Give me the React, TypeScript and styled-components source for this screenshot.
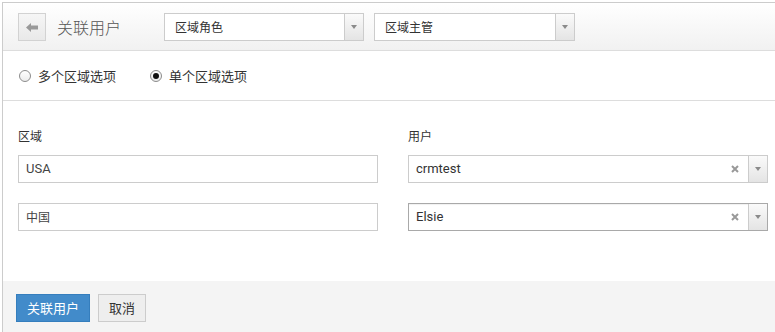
import React, { FC } from "react";
import styled, { createGlobalStyle } from "styled-components";

const GlobalStyle = createGlobalStyle`
  body {
    margin: 0;
    background: #fff;
    font-family: Roboto, "Noto Sans CJK SC", sans-serif;
    overflow: hidden;
  }
`;

const Panel = styled.div`
  margin: 2px 0 0 2px;
  border-left: 1px solid #ccc;
  border-top: 1px solid #ccc;
  width: 773px;
  height: 329px;
  display: flex;
  flex-direction: column;
`;

const Header = styled.div`
  height: 48px;
  flex-shrink: 0;
  box-sizing: border-box;
  padding: 10px 15px 0;
  display: flex;
  align-items: flex-start;
  background: linear-gradient(to bottom, #ffffff, #f1f1f1);
  border-bottom: 1px solid #ddd;
`;

const BackButton = styled.div`
  width: 28px;
  height: 28px;
  box-sizing: border-box;
  border: 1px solid #d2d2d2;
  background: linear-gradient(to bottom, #f6f6f6, #e9e9e9);
  display: flex;
  align-items: center;
  justify-content: center;
`;

const Title = styled.div`
  font-family: "Noto Sans CJK SC", sans-serif;
  font-size: 16px;
  font-weight: 300;
  color: #555;
  line-height: 28px;
  margin-left: 11px;
  width: 107px;
`;

const Select = styled.div<{ $width: number; $focused?: boolean }>`
  width: ${(p) => p.$width}px;
  height: 28px;
  box-sizing: border-box;
  border: 1px solid ${(p) => (p.$focused ? "#a9a9a9" : "#ccc")};
  box-shadow: ${(p) => (p.$focused ? "inset 0 1px 1px rgba(0,0,0,0.06)" : "none")};
  background: #fff;
  display: flex;
  align-items: stretch;
  margin-right: 10px;
`;

const SelectText = styled.div<{ $latin?: boolean }>`
  flex: 1;
  padding-left: ${(p) => (p.$latin ? 7 : 10)}px;
  font-family: ${(p) =>
    p.$latin ? `Roboto, sans-serif` : `"Noto Sans CJK SC", sans-serif`};
  font-size: ${(p) => (p.$latin ? 13 : 12)}px;
  color: #333;
  line-height: 26px;
`;

const ClearIcon = styled.div`
  width: 18px;
  display: flex;
  align-items: center;
  justify-content: center;
  margin-right: 4px;
`;

const Caret = styled.div<{ $w: number }>`
  width: ${(p) => p.$w}px;
  border-left: 1px solid #ccc;
  background: linear-gradient(to bottom, #fafafa, #e4e4e4);
  display: flex;
  align-items: center;
  justify-content: center;
  &::after {
    content: "";
    border-left: 3px solid transparent;
    border-right: 3px solid transparent;
    border-top: 4px solid #8a8a8a;
  }
`;

const RadioRow = styled.div`
  height: 50px;
  flex-shrink: 0;
  box-sizing: border-box;
  border-bottom: 1px solid #ddd;
  padding-left: 16px;
  display: flex;
  align-items: center;
  gap: 34px;
`;

const RadioOption = styled.label`
  display: flex;
  align-items: center;
  gap: 7px;
  font-family: "Noto Sans CJK SC", sans-serif;
  font-size: 13px;
  color: #333;
`;

const RadioCircle = styled.span<{ $checked?: boolean }>`
  width: 12px;
  height: 12px;
  box-sizing: border-box;
  border-radius: 50%;
  border: 1px solid #8c8c8c;
  background: linear-gradient(to bottom, #fff, #ececec);
  display: flex;
  align-items: center;
  justify-content: center;
  &::after {
    content: "";
    width: 6px;
    height: 6px;
    border-radius: 50%;
    background: ${(p) => (p.$checked ? "#111" : "transparent")};
  }
`;

const Form = styled.div`
  flex: 1;
  padding: 26px 0 0 15px;
  display: grid;
  grid-template-columns: 360px 360px;
  column-gap: 30px;
  align-content: start;
`;

const Column = styled.div`
  display: flex;
  flex-direction: column;
  gap: 20px;
`;

const Label = styled.div`
  font-family: "Noto Sans CJK SC", sans-serif;
  font-size: 12px;
  color: #333;
  line-height: 18px;
  margin-bottom: -10px;
`;

const Input = styled.div<{ $latin?: boolean }>`
  height: 28px;
  box-sizing: border-box;
  border: 1px solid #ccc;
  padding-left: 7px;
  font-family: ${(p) =>
    p.$latin ? `Roboto, sans-serif` : `"Noto Sans CJK SC", sans-serif`};
  font-size: ${(p) => (p.$latin ? 13 : 12)}px;
  color: #444;
  line-height: 26px;
`;

const Footer = styled.div`
  height: 51px;
  flex-shrink: 0;
  box-sizing: border-box;
  background: #f4f4f4;
  padding: 13px 0 0 13px;
  display: flex;
  align-items: flex-start;
  gap: 8px;
`;

const Button = styled.div<{ $primary?: boolean }>`
  height: 28px;
  box-sizing: border-box;
  padding: 0 ${(p) => (p.$primary ? 10 : 10)}px;
  border: 1px solid ${(p) => (p.$primary ? "#357ebd" : "#ccc")};
  background: ${(p) => (p.$primary ? "#428bca" : "#eee")};
  color: ${(p) => (p.$primary ? "#fff" : "#333")};
  font-family: "Noto Sans CJK SC", sans-serif;
  font-size: 13px;
  line-height: 26px;
`;

const BackArrow: FC = () => (
  <svg width="12" height="9" viewBox="0 0 12 9">
    <path d="M0 4.5 L5 0 L5 2.5 L12 2.5 L12 6.5 L5 6.5 L5 9 Z" fill="#999" />
  </svg>
);

const Cross: FC = () => (
  <svg width="8" height="8" viewBox="0 0 8 8">
    <path d="M1 1 L7 7 M7 1 L1 7" stroke="#999" strokeWidth="2" />
  </svg>
);

const App: FC = () => {
  return (
    <>
      <GlobalStyle />
      <Panel>
        <Header>
          <BackButton>
            <BackArrow />
          </BackButton>
          <Title>关联用户</Title>
          <Select $width={200}>
            <SelectText>区域角色</SelectText>
            <Caret $w={18} />
          </Select>
          <Select $width={201}>
            <SelectText>区域主管</SelectText>
            <Caret $w={18} />
          </Select>
        </Header>
        <RadioRow>
          <RadioOption>
            <RadioCircle />
            多个区域选项
          </RadioOption>
          <RadioOption>
            <RadioCircle $checked />
            单个区域选项
          </RadioOption>
        </RadioRow>
        <Form>
          <Column>
            <Label>区域</Label>
            <Input $latin>USA</Input>
            <Input>中国</Input>
          </Column>
          <Column>
            <Label>用户</Label>
            <Select $width={360}>
              <SelectText $latin>crmtest</SelectText>
              <ClearIcon>
                <Cross />
              </ClearIcon>
              <Caret $w={18} />
            </Select>
            <Select $width={360} $focused>
              <SelectText $latin>Elsie</SelectText>
              <ClearIcon>
                <Cross />
              </ClearIcon>
              <Caret $w={18} />
            </Select>
          </Column>
        </Form>
        <Footer>
          <Button $primary>关联用户</Button>
          <Button>取消</Button>
        </Footer>
      </Panel>
    </>
  );
};

export default App;
